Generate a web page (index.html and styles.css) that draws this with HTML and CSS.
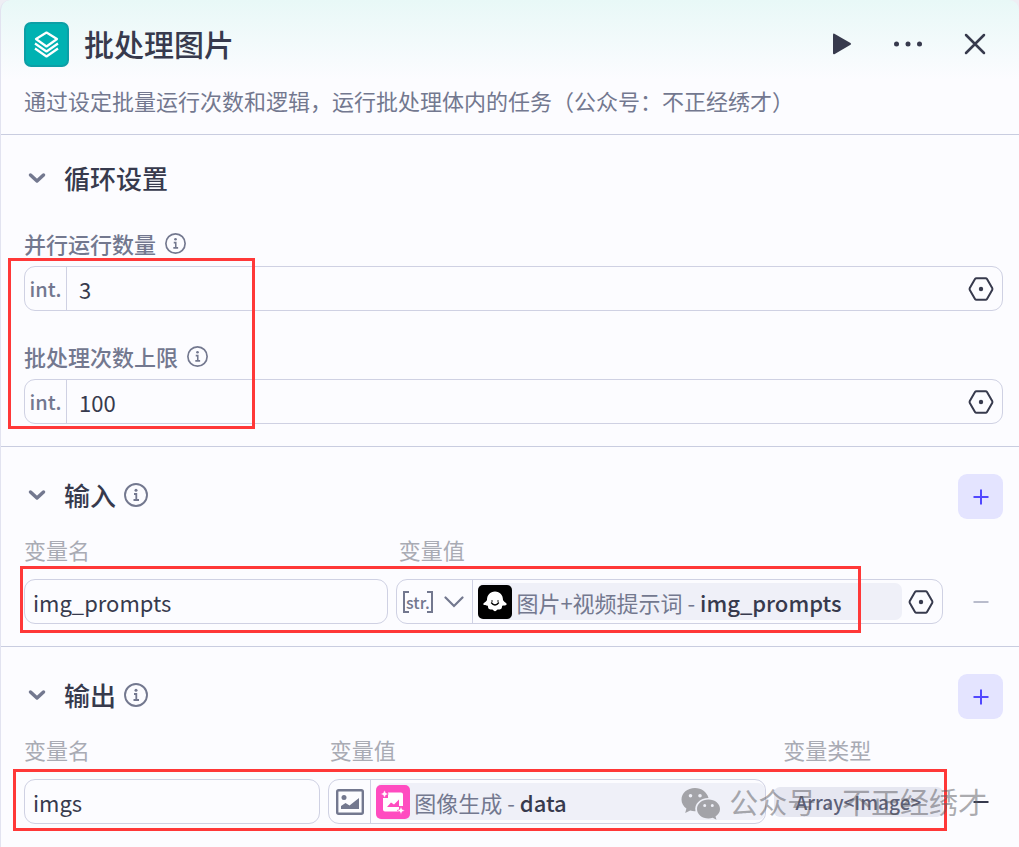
FILE: index.html
```
<!DOCTYPE html>
<html lang="zh-CN">
<head>
    <meta charset="UTF-8">
    <meta name="viewport" content="width=device-width, initial-scale=1.0">
    <title>批处理图片</title>
    <link rel="stylesheet" href="styles.css">
</head>
<body>
    <svg class="defs" aria-hidden="true">
        <symbol id="chevron" viewBox="0 0 18 18"><path d="M2.500 6l6.500 6 6.500-6" fill="none" stroke="currentColor" stroke-width="3.500" stroke-linecap="round" stroke-linejoin="round"/></symbol>
        <symbol id="info" viewBox="0 0 24 24"><circle cx="12" cy="12" r="11" fill="none" stroke="currentColor" stroke-width="1.900"/><circle cx="12" cy="7.200" r="1.500" fill="currentColor"/><path d="M10 11h2.300v6M9.500 17h5.500" fill="none" stroke="currentColor" stroke-width="1.800"/></symbol>
        <symbol id="hexagon" viewBox="0 0 26 24"><path d="M8.500 1.200h9q1 0 1.500.9l5.200 9q.5.900 0 1.800l-5.200 9q-.5.900-1.500.9h-9q-1 0-1.500-.9l-5.200-9q-.5-.9 0-1.800l5.200-9q.5-.9 1.500-.9z" fill="none" stroke="currentColor" stroke-width="2"/><circle cx="13" cy="12" r="2.200" fill="currentColor"/></symbol>
        <symbol id="plus" viewBox="0 0 16 16"><path d="M8 .5v15M.5 8h15" stroke="currentColor" stroke-width="2"/></symbol>
        <symbol id="minus" viewBox="0 0 16 16"><path d="M.5 8h15" stroke="currentColor" stroke-width="2"/></symbol>
    </svg>

    <main class="panel">
        <header class="header">
            <div class="title-row">
                <svg class="logo" viewBox="0 0 45 45">
                    <rect x="1" y="1" width="43" height="43" rx="6" fill="#00b2b2" stroke="#0c9fa6" stroke-width="2"/>
                    <g fill="none" stroke="#fff" stroke-width="2.200" stroke-linejoin="round">
                        <path d="M22.500 10.500l10.500 6.500-10.500 7.500-10.500-7.500z"/>
                        <path d="M11 21.500l11.500 8 11.500-8"/>
                        <path d="M11 26.500l11.500 8 11.500-8"/>
                    </g>
                </svg>
                <h1>批处理图片</h1>
                <div class="actions">
                    <button aria-label="运行"><svg width="30" height="30" viewBox="0 0 30 30"><path d="M7 6q0-2 1.800-1.100l15.700 9q1.300.9 0 1.800l-15.700 9.200Q7 25.800 7 24z" fill="currentColor"/></svg></button>
                    <button aria-label="更多"><svg width="30" height="30" viewBox="0 0 30 30" fill="currentColor"><circle cx="3.500" cy="15" r="2.500"/><circle cx="15" cy="15" r="2.500"/><circle cx="26.500" cy="15" r="2.500"/></svg></button>
                    <button aria-label="关闭"><svg width="30" height="30" viewBox="0 0 30 30"><path d="M6 6l18 18M24 6L6 24" stroke="currentColor" stroke-width="2.500" stroke-linecap="round"/></svg></button>
                </div>
            </div>
            <p class="desc">通过设定批量运行次数和逻辑，运行批处理体内的任务（公众号：不正经绣才）</p>
        </header>

        <section class="section settings">
            <div class="section-head">
                <button class="toggle" aria-label="收起循环设置"><svg width="18" height="18"><use href="#chevron"/></svg></button>
                <h2>循环设置</h2>
            </div>
            <div class="item">
                <label for="parallel">并行运行数量 <svg width="21" height="21"><use href="#info"/></svg></label>
                <div class="field">
                    <span class="type">int.</span>
                    <input type="text" id="parallel" value="3">
                    <button class="pick" aria-label="引用变量"><svg width="26" height="24"><use href="#hexagon"/></svg></button>
                </div>
            </div>
            <div class="item">
                <label for="limit">批处理次数上限 <svg width="21" height="21"><use href="#info"/></svg></label>
                <div class="field">
                    <span class="type">int.</span>
                    <input type="text" id="limit" value="100">
                    <button class="pick" aria-label="引用变量"><svg width="26" height="24"><use href="#hexagon"/></svg></button>
                </div>
            </div>
            <div class="mark mark-settings"></div>
        </section>

        <section class="section">
            <div class="section-head">
                <button class="toggle" aria-label="收起输入"><svg width="18" height="18"><use href="#chevron"/></svg></button>
                <h2>输入</h2>
                <svg class="info" width="24" height="24"><use href="#info"/></svg>
                <button class="add" aria-label="添加输入"><svg width="16" height="16"><use href="#plus"/></svg></button>
            </div>
            <div class="table">
                <div class="cols cols-input names">
                    <label for="inName">变量名</label>
                    <span>变量值</span>
                </div>
                <div class="cols cols-input">
                    <div class="field"><input type="text" id="inName" value="img_prompts"></div>
                    <div class="field">
                        <button class="type type-menu" aria-label="变量类型">
                            <span class="str">str.</span>
                            <svg width="20" height="12" viewBox="0 0 20 12"><path d="M1.500 1.500l8.500 8.500 8.500-8.500" fill="none" stroke="currentColor" stroke-width="2.200" stroke-linecap="round"/></svg>
                        </button>
                        <div class="chip">
                            <svg width="34" height="34" viewBox="0 0 34 34">
                                <rect width="34" height="34" rx="5" fill="#000"/>
                                <path d="M17 6.500c-5 0-8 3.600-8 8.500-.3 1.600-3.900 2.700-3.700 4.300.2 1.400 2.900 1.200 4.500 1.400.4 1.500.2 2.700 1.300 3.400 1.200.7 2.300 0 3.300.5.900.6 1.500 1.600 2.600 1.600s1.700-1 2.600-1.600c1-.5 2.100.2 3.300-.5 1.100-.7.900-1.900 1.300-3.400 1.600-.2 4.300 0 4.500-1.400.2-1.600-3.400-2.700-3.700-4.300 0-4.900-3-8.500-8-8.500z" fill="#fff"/>
                                <path d="M13.200 17.500q3.800 5 7.600 0" fill="none" stroke="#000" stroke-width="1.400"/>
                                <circle cx="14" cy="16" r=".8" fill="#000"/><circle cx="20" cy="16" r=".8" fill="#000"/>
                            </svg>
                            <span>图片+视频提示词 - <b>img_prompts</b></span>
                        </div>
                        <button class="pick" aria-label="引用变量"><svg width="26" height="24"><use href="#hexagon"/></svg></button>
                    </div>
                    <button class="remove disabled" aria-label="删除"><svg width="16" height="16"><use href="#minus"/></svg></button>
                </div>
            </div>
            <div class="mark mark-input"></div>
        </section>

        <section class="section">
            <div class="section-head">
                <button class="toggle" aria-label="收起输出"><svg width="18" height="18"><use href="#chevron"/></svg></button>
                <h2>输出</h2>
                <svg class="info" width="24" height="24"><use href="#info"/></svg>
                <button class="add" aria-label="添加输出"><svg width="16" height="16"><use href="#plus"/></svg></button>
            </div>
            <div class="table">
                <div class="cols cols-output names">
                    <label for="outName">变量名</label>
                    <span>变量值</span>
                    <span class="name-type">变量类型</span>
                </div>
                <div class="cols cols-output">
                    <div class="field"><input type="text" id="outName" value="imgs"></div>
                    <div class="field">
                        <span class="type">
                            <svg width="28" height="26" viewBox="0 0 28 26">
                                <rect x="1.200" y="1.200" width="25.600" height="23.600" rx="1.500" fill="none" stroke="currentColor" stroke-width="2.400"/>
                                <circle cx="8" cy="8.500" r="2.500" fill="currentColor"/>
                                <path d="M5 20v-3l4.500-3 4 2.500L23 9v11z" fill="currentColor"/>
                            </svg>
                        </span>
                        <div class="chip">
                            <svg width="34" height="34" viewBox="0 0 34 34">
                                <rect width="34" height="34" rx="5" fill="#ff4cc0"/>
                                <path d="M12 7.500h13q2 0 2 2V21h-4v5.500H9q-2 0-2-2V13h5z" fill="#fff"/>
                                <path d="M11 22l4-4.500 3 2 5-5V22z" fill="#ff4cc0"/>
                                <path d="M8.500 5l1.300 2.700L12.500 9 9.800 10.300 8.500 13 7.200 10.300 4.500 9l2.700-1.300zM25 21.500l1.200 2.800L29 25.500l-2.800 1.200L25 29.500l-1.200-2.800L21 25.500l2.800-1.200z" fill="#fff" stroke="#ff4cc0" stroke-width=".6"/>
                            </svg>
                            <span>图像生成 - <b>data</b></span>
                        </div>
                    </div>
                    <span class="tag">Array&lt;Image&gt;</span>
                    <button class="remove" aria-label="删除"><svg width="16" height="16"><use href="#minus"/></svg></button>
                </div>
            </div>
            <div class="mark mark-output"></div>
            <div class="watermark">
                <svg width="40" height="32" viewBox="0 0 40 32">
                    <path fill-rule="evenodd" d="M14 0C6.300 0 .5 5 .5 11.500c0 3.700 1.900 6.800 4.900 9L4.200 25l5-2.500c1.900.5 3.300.8 5.300.7C13 16 19 10 27.500 10 26 4 20.500 0 14 0zM9.500 6a1.800 1.800 0 1 1 0 3.600 1.800 1.800 0 0 1 0-3.600zm9.500 0a1.800 1.800 0 1 1 0 3.600A1.800 1.800 0 0 1 19 6z"/>
                    <path fill-rule="evenodd" d="M27.500 11.500C21 11.500 16 15.700 16 21s5 9.500 11.500 9.500c1.500 0 2.900-.3 4.200-.7l3.800 2-1-3.400C37.500 26.500 39 24 39 21c0-5.300-5-9.500-11.500-9.500zM23.700 16a1.500 1.500 0 1 1 0 3 1.500 1.500 0 0 1 0-3zm7.600 0a1.500 1.500 0 1 1 0 3 1.500 1.500 0 0 1 0-3z"/>
                </svg>
                <span>公众号 · 不正经绣才</span>
            </div>
        </section>
    </main>
</body>
</html>
```

FILE: styles.css
```
* {
    box-sizing: border-box;
}
body {
    margin: 0;
    background-color: #eeeef4;
    color: #373a4d;
    font-family: "Noto Sans CJK SC", sans-serif;
    font-size: 22px;
    line-height: 28px;
}
h1, h2, p {
    margin: 0;
    font-weight: 500;
}
button {
    display: flex;
    align-items: center;
    justify-content: center;
    padding: 0;
    border: none;
    background: none;
    color: inherit;
    font: inherit;
    cursor: pointer;
}
svg {
    flex: none;
}
.defs {
    position: absolute;
    width: 0;
    height: 0;
}
.panel {
    min-height: 100vh;
    border-left: 1px solid #e2e3f0;
    border-radius: 10px 10px 0 0;
    background: linear-gradient(#e8f8f7, #fcfcff 80px);
}

/* header */
.header {
    padding: 22px 29px 20px 23px;
    border-bottom: 1px solid #c9cde0;
}
.title-row {
    display: flex;
    align-items: center;
    margin-bottom: 19px;
}
.logo {
    width: 45px;
    height: 45px;
    margin-right: 15px;
}
h1 {
    padding-bottom: 4px;
    font-size: 30px;
}
.actions {
    display: flex;
    gap: 37px;
    margin-left: auto;
    padding-bottom: 2px;
}
.desc {
    color: #73788f;
    font-weight: 400;
}

/* sections */
.section {
    position: relative;
    padding: 27px 16px 22px 23px;
    border-bottom: 1px solid #c9cde0;
}
.section:last-child {
    border-bottom: none;
}
.settings {
    padding-top: 22px;
}
.section-head {
    display: flex;
    align-items: center;
    height: 45px;
    margin-bottom: 16px;
}
.settings .section-head {
    margin-bottom: 27px;
}
h2, .toggle, .info {
    margin-bottom: 4px;
}
h2 {
    font-size: 26px;
}
.toggle {
    width: 26px;
    height: 26px;
    margin-right: 14px;
    color: #73788f;
}
.info {
    margin-left: 8px;
    color: #73788f;
}
.add {
    width: 45px;
    height: 45px;
    margin-left: auto;
    border-radius: 9px;
    background-color: #e4e4ff;
    color: #5147ff;
}
.item {
    margin-bottom: 31px;
}
.item:nth-of-type(3) {
    margin-bottom: 0;
}
.item label {
    display: flex;
    align-items: center;
    gap: 9px;
    margin-bottom: 9px;
    color: #73788f;
    font-weight: 500;
}

/* fields */
.field {
    display: flex;
    align-items: center;
    min-width: 0;
    height: 45px;
    overflow: hidden;
    border: 1px solid #cfd1e3;
    border-radius: 11px;
}
.field input {
    flex: 1;
    min-width: 0;
    height: 100%;
    padding: 0 8px;
    border: none;
    outline: none;
    background: none;
    color: inherit;
    font: inherit;
}
.type + input {
    padding-left: 12px;
}
.type {
    display: flex;
    flex: none;
    align-items: center;
    justify-content: center;
    width: 42px;
    height: 100%;
    border-right: 1px solid #cfd1e3;
    color: #73788f;
    font-size: 20px;
    font-weight: 500;
}
.type-menu {
    gap: 14px;
    width: 76px;
}
.str {
    position: relative;
    font-size: 16px;
    line-height: 22px;
}
.str::before, .str::after {
    content: "";
    position: absolute;
    top: 0;
    bottom: 0;
    left: -3px;
    width: 4px;
    border: 2px solid;
    border-right: none;
}
.str::after {
    right: -3px;
    left: auto;
    border-right: 2px solid;
    border-left: none;
}
.pick {
    width: 26px;
    margin: 0 8px 0 6px;
}
.chip {
    display: flex;
    flex: 1;
    align-items: center;
    gap: 4px;
    min-width: 0;
    height: 37px;
    margin-left: 5px;
    border-radius: 7px;
    background-color: #eff0f8;
    color: #73788f;
    white-space: nowrap;
}
.chip b {
    color: #373a4d;
    font-weight: 500;
}

/* variable rows */
.cols {
    display: grid;
    align-items: center;
    column-gap: 8px;
    padding-right: 60px;
    position: relative;
}
.cols-input {
    grid-template-columns: 2fr 3fr;
}
.cols-output {
    grid-template-columns: 21fr 31fr 12fr;
}
.names {
    column-gap: 12px;
    margin-bottom: 16px;
    color: #a9abb4;
}
.name-type {
    padding-left: 8px;
}
.remove {
    position: absolute;
    top: 0;
    right: 0;
    width: 45px;
    height: 45px;
}
.disabled {
    color: #b9bccc;
}
.tag {
    border-radius: 6px;
    background-color: #e6e7f1;
    color: #5c6078;
    font-size: 19px;
    font-weight: 500;
    line-height: 30px;
    text-align: center;
}

/* red marks and watermark */
.mark {
    position: absolute;
    border: 3px solid #ff3838;
    pointer-events: none;
}
.mark-settings {
    top: 123px;
    bottom: 17px;
    left: 7px;
    width: 247px;
}
.mark-input {
    top: 119px;
    right: 158px;
    bottom: 13px;
    left: 19px;
}
.mark-output {
    top: 122px;
    right: 72px;
    bottom: 15px;
    left: 12px;
}
.watermark {
    position: absolute;
    right: 32px;
    bottom: 22px;
    display: flex;
    align-items: center;
    gap: 8px;
    color: rgba(90, 90, 95, 0.5);
    font-family: "Liberation Sans", "Noto Sans CJK SC", sans-serif;
    font-size: 29px;
    line-height: 40px;
    pointer-events: none;
}
.watermark svg {
    fill: #a3a3a8;
}
```
